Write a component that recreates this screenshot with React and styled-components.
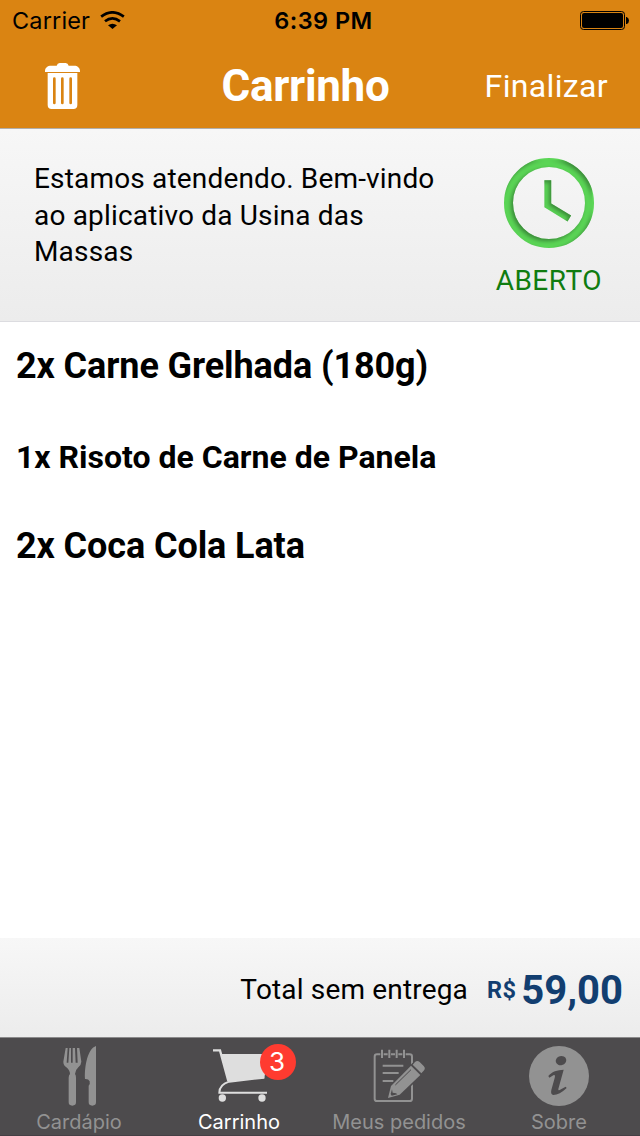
import React from "react";
import styled, { createGlobalStyle } from "styled-components";

const GlobalStyle = createGlobalStyle`
  *, *::before, *::after { box-sizing: border-box; }
  html, body { margin: 0; padding: 0; background: #fff; }
  body { font-family: Roboto, "Liberation Sans", sans-serif; color: #000; }
  svg { display: block; flex: none; }
`;

const Screen = styled.div`
  width: 640px;
  height: 1136px;
  display: flex;
  flex-direction: column;
  overflow: hidden;
  background: #fff;
`;

const Header = styled.header`
  background: #da8412;
  border-bottom: 1px solid #b2aeaa;
  height: 129px;
  flex: none;
`;

const StatusBar = styled.div`
  display: grid;
  grid-template-columns: 1fr auto 1fr;
  align-items: center;
  height: 41px;
  padding: 1px 11px 0 12px;
  font-family: Inter, "Liberation Sans", sans-serif;
  font-size: 23.5px;
  line-height: 40px;
`;

const Carrier = styled.div`
  display: flex;
  align-items: center;
  gap: 10px;
  letter-spacing: 0.15px;
`;

const Clock = styled.div`
  font-weight: 560;
  letter-spacing: 0.45px;
  padding-left: 6px;
`;

const Battery = styled.div`
  display: flex;
  justify-content: flex-end;
`;

const NavBar = styled.nav`
  display: grid;
  grid-template-columns: 1fr auto 1fr;
  align-items: center;
  height: 87px;
  padding: 3px 32px 0 45px;
  color: #fff;
`;

const IconButton = styled.button`
  border: 0;
  padding: 0;
  background: none;
  justify-self: start;
`;

const Title = styled.h1`
  margin: 0;
  font-size: 44px;
  line-height: 52px;
  font-weight: 700;
  letter-spacing: -0.3px;
  padding-right: 42px;
`;

const TextButton = styled.button`
  border: 0;
  padding: 0;
  background: none;
  color: inherit;
  font: 400 32px/40px Roboto, sans-serif;
  letter-spacing: 0.35px;
  justify-self: end;
`;

const Notice = styled.section`
  display: flex;
  justify-content: space-between;
  height: 193px;
  flex: none;
  padding: 29px 38px 0 34px;
  background: linear-gradient(#f7f7f7, #ececec);
  border-bottom: 1px solid #dcdce0;
`;

const Message = styled.p`
  margin: 3px 0 0;
  width: 420px;
  font-size: 28px;
  line-height: 36.5px;
  letter-spacing: 0.17px;
`;

const Status = styled.div`
  display: flex;
  flex-direction: column;
  align-items: center;
  gap: 16px;
  color: #107c10;
  font-size: 28px;
  line-height: 33px;
  letter-spacing: 0.5px;
`;

const Items = styled.ul`
  list-style: none;
  margin: 0;
  padding: 0 16px;
  flex: 1;
`;

const Item = styled.li`
  height: 90px;
  line-height: ${(p) => (p.$compact ? 90 : 88)}px;
  font-weight: 700;
  white-space: nowrap;
  font-size: ${(p) => (p.$compact ? 32 : 36)}px;
  letter-spacing: ${(p) => (p.$compact ? 0 : -0.1)}px;
`;

const TotalBar = styled.section`
  display: flex;
  align-items: center;
  justify-content: flex-end;
  height: 99px;
  flex: none;
  padding: 4px 17px 0 0;
  background: linear-gradient(#f7f7f7, #ececec);
`;

const TotalLabel = styled.span`
  font-size: 28px;
  letter-spacing: 0.17px;
  margin-right: 19px;
`;

const Currency = styled.span`
  font-size: 23.5px;
  font-weight: 700;
  color: #123e70;
  letter-spacing: 0.4px;
  margin-right: 5px;
`;

const Amount = styled.span`
  font-size: 40px;
  font-weight: 700;
  color: #123e70;
  padding-top: 2px;
`;

const TabBar = styled.nav`
  display: grid;
  grid-template-columns: repeat(4, 1fr);
  height: 99px;
  flex: none;
  background: #4d4b4d;
  border-top: 1px solid #8b8a8b;
  border-bottom: 1px solid #443f44;
`;

const Tab = styled.div`
  position: relative;
  display: flex;
  flex-direction: column;
  align-items: center;
  color: ${(p) => (p.$active ? "#fff" : "#929292")};
  font-family: Inter, "Liberation Sans", sans-serif;
  font-size: 20px;
  line-height: 24px;
  white-space: nowrap;
`;

const TabLabel = styled.span`
  margin-right: 2px;
`;

const Badge = styled.span`
  position: absolute;
  left: 100px;
  top: 6px;
  width: 36px;
  height: 36px;
  padding-right: 2px;
  border-radius: 50%;
  background: #ff3b30;
  color: #fff;
  font-size: 26px;
  line-height: 36px;
  text-align: center;
`;

const WifiIcon = () => (
  <svg width="25" height="20" viewBox="0 0 75 60">
    <g fill="none" stroke="#000" strokeWidth="8">
      <path d="M3.500 17Q37 -9 71.500 17" />
      <path d="M15 31Q37 13 60 31" />
    </g>
    <path d="M24 43Q37 33 51 43L37.500 54Z" />
  </svg>
);

const BatteryIcon = () => (
  <svg width="49" height="20" viewBox="0 0 49 20">
    <rect x="0.500" y="0.500" width="44" height="18" rx="3" fill="none" stroke="#000" />
    <rect x="2" y="2" width="41" height="15" rx="2" />
    <path d="M46 6h.8q2.200 1 2.200 3.500t-2.200 3.500h-.8z" />
  </svg>
);

const TrashIcon = () => (
  <svg width="35" height="46" viewBox="0 0 105 138" fill="#fff">
    <path d="M0 27V24C0 14 8 8 18 8H35Q37 0 44 0H62Q69 0 71 8H88C97 8 105 14 105 24V27Z" />
    <path
      fillRule="evenodd"
      d="M8 30H97V126Q97 138 85 138H20Q8 138 8 126Z
         M28 43q-4 0-4 4v73q0 4 4 4t4-4v-73q0-4-4-4z
         M52 43q-4 0-4 4v73q0 4 4 4t4-4v-73q0-4-4-4z
         M77 43q-4 0-4 4v73q0 4 4 4t4-4v-73q0-4-4-4z"
    />
  </svg>
);

const OpenClockIcon = () => (
  <svg width="90" height="90" viewBox="0 0 90 90">
    <defs>
      <filter id="inset" x="0" y="0" width="90" height="90" filterUnits="userSpaceOnUse" colorInterpolationFilters="sRGB">
        <feComponentTransfer in="SourceAlpha" result="inverse">
          <feFuncA type="linear" slope="-1" intercept="1" />
        </feComponentTransfer>
        <feGaussianBlur in="inverse" stdDeviation="2" />
        <feOffset dx="-2" dy="2" result="soft" />
        <feFlood floodColor="#2d6b2d" floodOpacity="0.75" />
        <feComposite in2="soft" operator="in" />
        <feComposite in2="SourceAlpha" operator="in" result="shade" />
        <feMerge>
          <feMergeNode in="SourceGraphic" />
          <feMergeNode in="shade" />
        </feMerge>
      </filter>
    </defs>
    <g fill="none" stroke="#5bd656" filter="url(#inset)">
      <circle cx="45" cy="45" r="40.500" strokeWidth="9" />
      <path d="M43.800 22.300V47.300L65.300 60.500" strokeWidth="6.800" />
    </g>
  </svg>
);

const TabIcon = ({ children }) => (
  <svg width="80" height="72" viewBox="120 24 240 216">
    {children}
  </svg>
);

const CutleryIcon = () => (
  <TabIcon>
    <g fill="#929292">
      <path d="M197 54H203L200 98H205L208 54H213V98H218V54H225L227 98H233L231 54H238L244 95Q243 107 235 112Q225 121 225 132Q228 136 228 143V217Q228 227 217 227T206 217V143Q206 136 210 132Q210 121 199 112Q190 106 190 95Z" />
      <path d="M288 48V217Q288 227 277 227T266 217V167Q271 162 269 154Q265 146 255 147C253 106 264 56 288 48Z" />
    </g>
  </TabIcon>
);

const CartIcon = () => (
  <TabIcon>
    <path d="M184 72H325L313 144L205 155Z" fill="#dedede" />
    <g fill="none" stroke="#dedede">
      <path d="M159 61H180L205 153" strokeWidth="7" />
      <path d="M313 143L207 155Q178 164 178 188H321" strokeWidth="6" />
    </g>
    <circle cx="187" cy="204" r="11" fill="#dedede" />
    <circle cx="306" cy="204" r="11" fill="#dedede" />
  </TabIcon>
);

const NotepadIcon = () => (
  <TabIcon>
    <g fill="none" stroke="#929292" strokeWidth="6">
      <rect x="164" y="73" width="112" height="140" rx="7" />
      <path d="M188 107H250M188 129H236M188 153H220" />
    </g>
    <path d="M186 58V86M208 58V86M230 58V86M252 58V86" stroke="#4d4b4d" strokeWidth="10" />
    <path d="M186 59V84M208 59V84M230 59V84M252 59V84" stroke="#929292" strokeWidth="6" />
    <path d="M201 205L209 168L278 98L312 132L241 198Z" fill="#4d4b4d" />
    <g fill="#929292">
      <path d="M204 204L213 168L273 107L301 135L239 194Z" />
      <path d="M278 104L285 96Q292 90 299 96L311 108Q318 115 311 122L304 130Z" />
    </g>
    <path d="M226 165L273 119" stroke="#4d4b4d" strokeWidth="3" />
    <path d="M216 178L218 188L228 190L232 193L215 197L212 192Z" fill="#4d4b4d" />
  </TabIcon>
);

const InfoIcon = () => (
  <TabIcon>
    <circle cx="237" cy="138" r="90" fill="#929292" />
    <ellipse cx="243" cy="92" rx="16" ry="13.500" transform="rotate(-15 243 92)" fill="#4d4b4d" />
    <path d="M205 138C216 124 232 120 251 119L235 177Q234 184 243 178L257 170L260 174C246 188 232 195 220 195Q211 194 214 180L224 144Q227 133 220 136L208 143Z" fill="#4d4b4d" />
  </TabIcon>
);

const items = [
  { name: "2x Carne Grelhada (180g)" },
  { name: "1x Risoto de Carne de Panela", compact: true },
  { name: "2x Coca Cola Lata" },
];

const tabs = [
  { label: "Cardápio", Icon: CutleryIcon },
  { label: "Carrinho", Icon: CartIcon, active: true, badge: 3 },
  { label: "Meus pedidos", Icon: NotepadIcon },
  { label: "Sobre", Icon: InfoIcon },
];

export default function App() {
  return (
    <>
      <GlobalStyle />
      <Screen>
        <Header>
          <StatusBar>
            <Carrier>
              Carrier
              <WifiIcon />
            </Carrier>
            <Clock>6:39 PM</Clock>
            <Battery>
              <BatteryIcon />
            </Battery>
          </StatusBar>
          <NavBar>
            <IconButton aria-label="Esvaziar carrinho">
              <TrashIcon />
            </IconButton>
            <Title>Carrinho</Title>
            <TextButton>Finalizar</TextButton>
          </NavBar>
        </Header>
        <Notice>
          <Message>Estamos atendendo. Bem-vindo ao aplicativo da Usina das Massas</Message>
          <Status>
            <OpenClockIcon />
            ABERTO
          </Status>
        </Notice>
        <Items>
          {items.map((item) => (
            <Item key={item.name} $compact={item.compact}>
              {item.name}
            </Item>
          ))}
        </Items>
        <TotalBar>
          <TotalLabel>Total sem entrega</TotalLabel>
          <Currency>R$</Currency>
          <Amount>59,00</Amount>
        </TotalBar>
        <TabBar>
          {tabs.map(({ label, Icon, active, badge }) => (
            <Tab key={label} $active={active}>
              <Icon />
              {badge && <Badge>{badge}</Badge>}
              <TabLabel>{label}</TabLabel>
            </Tab>
          ))}
        </TabBar>
      </Screen>
    </>
  );
}
